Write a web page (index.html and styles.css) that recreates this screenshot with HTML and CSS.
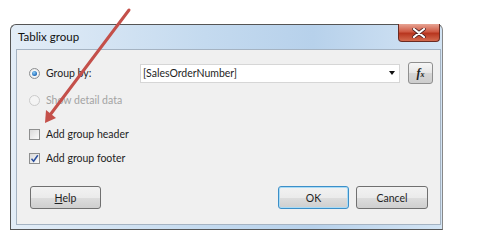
FILE: index.html
```html
<!DOCTYPE html>
<html lang="en">
<head>
  <meta charset="UTF-8" />
  <title>Tablix group</title>
  <link rel="stylesheet" href="styles.css">
</head>
<body>
  <div class="window">
    <div class="titlebar">
      <span class="title">Tablix group</span>
      <span class="close">
        <svg width="14" height="10" viewBox="0 0 14 10">
          <path d="M2 1 L12 9 M12 1 L2 9" stroke="#4a2020" stroke-width="3.6" stroke-linecap="round"/>
          <path d="M2 1 L12 9 M12 1 L2 9" stroke="#fff" stroke-width="2.2" stroke-linecap="round"/>
        </svg>
      </span>
    </div>
    <div class="client">
      <div class="row first">
        <label class="option">
          <span class="radio checked"></span>
          <span>Group by:</span>
        </label>
        <div class="field">
          <span>[SalesOrderNumber]</span>
          <span class="caret"></span>
        </div>
        <button class="fx"><i>f</i><small>x</small></button>
      </div>
      <div class="row">
        <label class="option disabled">
          <span class="radio"></span>
          <span>Show detail data</span>
        </label>
      </div>
      <div class="row spaced">
        <label class="option">
          <span class="check"></span>
          <span>Add group header</span>
        </label>
      </div>
      <div class="row tight">
        <label class="option">
          <span class="check">
            <svg width="9" height="9" viewBox="0 0 9 9">
              <path d="M1.5 4.8 L3.6 7.2 L7.8 1.3" fill="none" stroke="#2a4f9e" stroke-width="1.5"/>
            </svg>
          </span>
          <span>Add group footer</span>
        </label>
      </div>
      <div class="buttons">
        <button class="btn"><u>H</u>elp</button>
        <span class="spacer"></span>
        <button class="btn default">OK</button>
        <button class="btn">Cancel</button>
      </div>
    </div>
  </div>

  <!-- callout arrow drawn over the dialog -->
  <svg class="callout" width="480" height="245" viewBox="0 0 480 245">
    <line x1="129" y1="10" x2="50" y2="115" stroke="#c4504a" stroke-width="3" stroke-linecap="round"/>
    <polygon points="45,123 46,110 56,118" fill="#c4504a"/>
  </svg>
</body>
</html>
```

FILE: styles.css
```css
body {
  margin: 0;
  background: #fff;
  font-family: "Lato", "Open Sans", sans-serif;
  font-size: 10.5px;
  color: #1e1e1e;
}
.window {
  margin: 24px 0 0 10px;
  width: 433px;
  height: 206px;
  box-sizing: border-box;
  border: 1px solid #555;
  border-right-color: #888;
  border-radius: 6px 6px 0 0;
  padding: 0 1px 4px 5px;
  background: linear-gradient(to right, #e3edf7, #c4daef 45%, #b7d1eb 70%, #d3e4f4);
  display: flex;
  flex-direction: column;
}
.titlebar {
  height: 24px;
  display: flex;
  align-items: flex-start;
}
.title {
  margin: 5px 0 0 2px;
  font-size: 11.5px;
  color: #111;
}
.close {
  margin: -1px 1px 0 auto;
  width: 42px;
  height: 18px;
  box-sizing: border-box;
  border: 1px solid #6b2b22;
  border-top: 0;
  border-radius: 0 0 4px 4px;
  background: linear-gradient(#e7a494, #cf5a44 45%, #b8361f 55%, #d36a4e);
  display: flex;
  align-items: center;
  justify-content: center;
}
.client {
  flex: 1;
  border: 1px solid #a5b3c2;
  background: #f0f0f0;
  padding: 12px 0 0 12px;
  display: flex;
  flex-direction: column;
}
.row {
  height: 22px;
  display: flex;
  align-items: center;
  margin-top: 5px;
}
.row.first {
  margin-top: 0;
}
.row.spaced {
  margin-top: 12px;
}
.row.tight {
  margin-top: 2px;
}
.option {
  width: 111px;
  display: flex;
  align-items: center;
  gap: 6px;
}
.option.disabled {
  color: #a3a3a3;
}
.radio {
  width: 11px;
  height: 11px;
  box-sizing: border-box;
  border-radius: 50%;
  border: 1px solid #8d8f91;
  background: radial-gradient(circle, #fafafa 40%, #dcdcdc);
  display: flex;
  align-items: center;
  justify-content: center;
}
.radio.checked::after {
  content: "";
  width: 5px;
  height: 5px;
  border-radius: 50%;
  background: radial-gradient(circle at 40% 35%, #8fd0f7, #1c67b8 70%, #174a8a);
}
.disabled .radio {
  border-color: #cbcbcb;
  background: #f4f4f4;
}
.check {
  width: 11px;
  height: 11px;
  box-sizing: border-box;
  border: 1px solid #8e8f8f;
  background: linear-gradient(135deg, #dadada, #fbfbfb);
  display: flex;
  align-items: center;
  justify-content: center;
}
.field {
  width: 260px;
  height: 19px;
  box-sizing: border-box;
  border: 1px solid #d6d6d6;
  background: #fff;
  display: flex;
  align-items: center;
  padding: 0 4px 0 2px;
}
.caret {
  margin-left: auto;
  width: 0;
  height: 0;
  border-left: 3.5px solid transparent;
  border-right: 3.5px solid transparent;
  border-top: 4px solid #111;
}
.fx {
  margin-left: 8px;
  width: 25px;
  height: 22px;
  padding: 0;
  border: 1px solid #8f8f8f;
  border-radius: 3px;
  background: linear-gradient(#f6f6f6, #e6e6e6 50%, #d6d6d6 51%, #cdcdcd);
  font-family: "Liberation Serif", serif;
  font-weight: bold;
  color: #222;
}
.fx i {
  font-size: 12px;
}
.fx small {
  font-size: 8px;
  font-style: italic;
}
.buttons {
  display: flex;
  margin-top: 17px;
  padding-left: 1px;
}
.spacer {
  flex: 1;
}
.btn {
  width: 71px;
  height: 23px;
  margin-right: 7px;
  padding: 0;
  border: 1px solid #707070;
  border-radius: 3px;
  background: linear-gradient(#f2f2f2, #ebebeb 50%, #dddddd 51%, #cfcfcf);
  font-family: inherit;
  font-size: 10.5px;
  color: #1e1e1e;
}
.btn:last-child {
  width: 72px;
  margin-right: 12px;
}
.btn.default {
  border-color: #3c8fc8;
  box-shadow: inset 0 0 0 1px #a9dbf6;
}
.callout {
  position: absolute;
  left: 0;
  top: 0;
  pointer-events: none;
}
```
